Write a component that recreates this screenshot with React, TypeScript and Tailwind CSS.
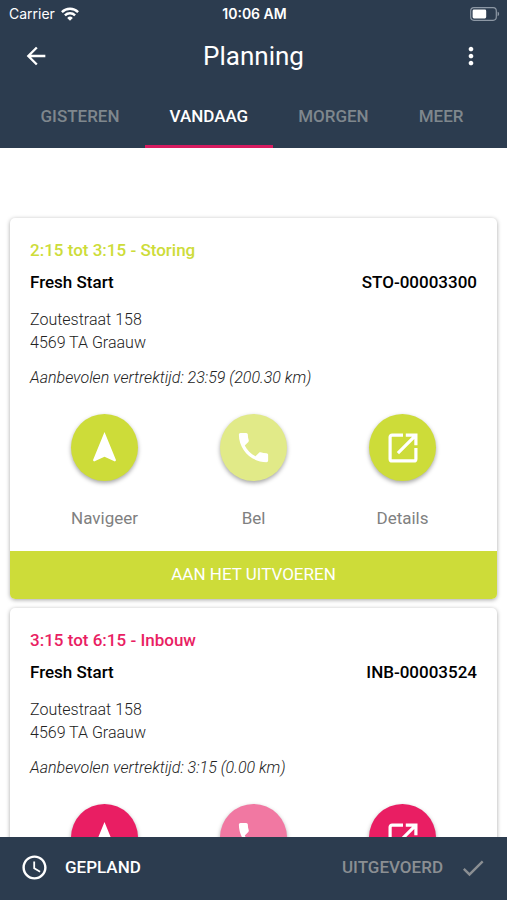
import React, { useState } from 'react';
import { MdArrowBack, MdCheck, MdMoreVert, MdNavigation, MdAccessTime } from 'react-icons/md';

interface Job {
  id: string;
  time: string;
  kind: string;
  customer: string;
  street: string;
  city: string;
  departure: string;
  distance: string;
  color: 'lime' | 'pink';
}

const jobs: Job[] = [
  {
    id: 'STO-00003300',
    time: '2:15 tot 3:15',
    kind: 'Storing',
    customer: 'Fresh Start',
    street: 'Zoutestraat 158',
    city: '4569 TA Graauw',
    departure: '23:59',
    distance: '200.30 km',
    color: 'lime',
  },
  {
    id: 'INB-00003524',
    time: '3:15 tot 6:15',
    kind: 'Inbouw',
    customer: 'Fresh Start',
    street: 'Zoutestraat 158',
    city: '4569 TA Graauw',
    departure: '3:15',
    distance: '0.00 km',
    color: 'pink',
  },
];

const tabs = ['Gisteren', 'Vandaag', 'Morgen', 'Meer'];

const textColor = { lime: 'text-[#cddc39]', pink: 'text-[#e91e63]' };
const bgColor = { lime: 'bg-[#cddc39]', pink: 'bg-[#e91e63]' };
const bgFaded = { lime: 'bg-[#e1ea88]', pink: 'bg-[#f178a2]' };

const WifiIcon = () => (
  <svg width="18" height="14" viewBox="0 0 18 14" fill="none" stroke="currentColor" strokeWidth="2.4" aria-hidden="true">
    <path d="M0.9 5.1a11.6 11.6 0 0 1 16.2 0" />
    <path d="M3.9 8.3a7.3 7.3 0 0 1 10.2 0" />
    <path d="M9 13.8 6.2 10.9a4 4 0 0 1 5.6 0z" fill="currentColor" stroke="none" />
  </svg>
);

const BatteryIcon = () => (
  <svg width="30" height="14" viewBox="0 0 30 14" fill="none" aria-hidden="true">
    <rect x="0.7" y="0.7" width="25.6" height="12.6" rx="3.2" stroke="#8d98a5" strokeWidth="1.2" />
    <rect x="2.6" y="2.6" width="13.6" height="8.8" rx="1.4" fill="#fff" />
    <path d="M27.6 4.8c2 .6 2 3.8 0 4.4z" fill="#8d98a5" />
  </svg>
);

const PhoneIcon = () => (
  <svg width="39" height="39" viewBox="0 0 24 24" fill="currentColor" aria-hidden="true">
    <path d="M6.62 10.79c1.44 2.83 3.76 5.14 6.59 6.59l2.2-2.2c.27-.27.67-.36 1.02-.24 1.12.37 2.33.57 3.57.57.55 0 1 .45 1 1V20c0 .55-.45 1-1 1-9.39 0-17-7.61-17-17 0-.55.45-1 1-1h3.5c.55 0 1 .45 1 1 0 1.25.2 2.45.57 3.57.11.35.03.74-.25 1.02l-2.2 2.2z" />
  </svg>
);

const OpenIcon = () => (
  <svg width="32" height="32" viewBox="0 0 32 32" fill="none" stroke="currentColor" strokeWidth="3.2" aria-hidden="true">
    <path d="M16 3.1H5.1a2 2 0 0 0-2 2v21.8a2 2 0 0 0 2 2h21.8a2 2 0 0 0 2-2V16" />
    <path d="M18.8 1.5h11.7v11.7h-3.2V7L12 22.2 9.8 20 25 4.7h-6.2z" fill="currentColor" stroke="none" />
  </svg>
);

const JobCard: React.FC<{ job: Job }> = ({ job }) => {
  const actions = [
    { label: 'Navigeer', icon: <MdNavigation size={37} />, disabled: false },
    { label: 'Bel', icon: <PhoneIcon />, disabled: true },
    { label: 'Details', icon: <OpenIcon />, disabled: false },
  ];

  return (
    <article className="shrink-0 overflow-hidden rounded-[5px] bg-white shadow-[0_1px_4px_rgba(0,0,0,0.35)]">
      <div className="px-5 pt-5 pb-[21px]">
        <h2 className={`text-[17px] leading-6 font-medium ${textColor[job.color]}`}>
          {job.time} - {job.kind}
        </h2>
        <div className="mt-2 flex justify-between text-[17px] leading-6 font-medium text-black">
          <span>{job.customer}</span>
          <span>{job.id}</span>
        </div>
        <address className="mt-3.5 text-base leading-[23px] font-light text-[#222] not-italic">
          {job.street}
          <br />
          {job.city}
        </address>
        <p className="mt-3 text-base leading-6 font-light text-[#222] italic">
          Aanbevolen vertrektijd: {job.departure} ({job.distance})
        </p>
        <div className="mt-6 grid grid-cols-3">
          {actions.map(action => (
            <button key={action.label} disabled={action.disabled} className="flex flex-col items-center gap-[25px]">
              <span
                className={`flex h-[67px] w-[67px] items-center justify-center rounded-full text-white shadow-[0_2px_4px_rgba(0,0,0,0.35)] ${
                  action.disabled ? bgFaded[job.color] : bgColor[job.color]
                }`}
              >
                {action.icon}
              </span>
              <span className="text-[17px] leading-6 text-[#808080]">{action.label}</span>
            </button>
          ))}
        </div>
      </div>
      <button className={`block h-12 w-full text-[17px] text-white uppercase ${bgColor[job.color]}`}>
        Aan het uitvoeren
      </button>
    </article>
  );
};

export default function App() {
  const [activeTab, setActiveTab] = useState('Vandaag');

  return (
    <div className="flex h-screen flex-col bg-white font-[Roboto,sans-serif]">
      {/* Header */}
      <header className="shrink-0 bg-[#2c3c4f] text-white">
        <div className="grid h-7 grid-cols-3 items-center pr-[7px] pl-[9px] font-[Inter,sans-serif] text-sm">
          <div className="flex items-center gap-1.5">
            <span>Carrier</span>
            <WifiIcon />
          </div>
          <span className="text-center font-semibold">10:06 AM</span>
          <div className="flex justify-end">
            <BatteryIcon />
          </div>
        </div>
        <div className="flex h-14 items-center justify-between px-[22px]">
          <button aria-label="Terug">
            <MdArrowBack size={28} />
          </button>
          <h1 className="text-[26px]">Planning</h1>
          <button aria-label="Menu">
            <MdMoreVert size={28} />
          </button>
        </div>
        <nav className="flex h-16 justify-center pr-[3px]">
          {tabs.map(tab => (
            <button
              key={tab}
              onClick={() => setActiveTab(tab)}
              className={`border-b-[3px] px-[25px] pt-1 text-[17px] font-medium uppercase ${
                tab === activeTab ? 'border-b-[#d81b60] text-white' : 'border-b-transparent text-[#7f878d]'
              }`}
            >
              {tab}
            </button>
          ))}
        </nav>
      </header>

      {/* Job list */}
      <main className="flex min-h-0 flex-1 flex-col gap-[9px] overflow-y-auto px-2.5 pt-[70px] [scrollbar-width:none]">
        {jobs.map(job => (
          <JobCard key={job.id} job={job} />
        ))}
      </main>

      {/* Status switch */}
      <footer className="flex h-[63px] shrink-0 items-center justify-between bg-[#2c3c4f] px-5 pb-0.5 text-[17px] font-medium">
        <button className="flex items-center gap-4 text-white">
          <MdAccessTime size={29} />
          GEPLAND
        </button>
        <button className="flex items-center gap-4 text-[#8b8f93]">
          UITGEVOERD
          <MdCheck size={28} />
        </button>
      </footer>
    </div>
  );
}
